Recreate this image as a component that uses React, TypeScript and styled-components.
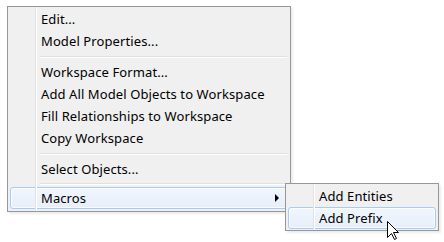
import React from 'react';
import styled, { createGlobalStyle } from 'styled-components';

const GlobalStyle = createGlobalStyle`
  html, body {
    margin: 0;
    padding: 0;
    background: #ffffff;
  }
  body {
    font-family: 'Noto Sans', 'Open Sans', sans-serif;
    font-size: 13px;
    letter-spacing: 0.1px;
    color: #000;
  }
`;

const Stage = styled.div`
  position: relative;
  width: 444px;
  height: 242px;
  padding: 6px 0 0 7px;
  box-sizing: border-box;
  overflow: hidden;
`;

const Menu = styled.div<{ $width: number }>`
  position: relative;
  width: ${(p) => p.$width}px;
  box-sizing: border-box;
  border: 1px solid #979797;
  background: #f0f0f0;
  padding: 1px 2px 2px;
  display: flex;
  flex-direction: column;
  box-shadow: 2px 2px 2px rgba(0, 0, 0, 0.08);

  &::before {
    content: '';
    position: absolute;
    top: 0;
    bottom: 0;
    left: 27px;
    width: 1px;
    background: #e2e3e3;
    border-right: 1px solid #ffffff;
    z-index: 1;
    pointer-events: none;
  }
`;

const SubMenu = styled(Menu)`
  position: absolute;
  left: 274px;
  top: -5px;
  padding: 1px 2px;
  z-index: 5;
`;

const Item = styled.div<{ $active?: boolean }>`
  position: relative;
  height: 22px;
  box-sizing: border-box;
  display: flex;
  align-items: center;
  padding-left: 30px;
  border: 1px solid ${(p) => (p.$active ? '#a8cbf3' : 'transparent')};
  border-radius: 3px;
  background: ${(p) =>
    p.$active ? 'linear-gradient(to bottom, #f1f6fd 0%, #e6eefa 100%)' : 'transparent'};
  box-shadow: ${(p) => (p.$active ? 'inset 0 0 0 1px rgba(255,255,255,0.7)' : 'none')};
  white-space: nowrap;
`;

const Label = styled.span`
  flex: 1;
`;

const Arrow = styled.span`
  width: 0;
  height: 0;
  border-top: 4px solid transparent;
  border-bottom: 4px solid transparent;
  border-left: 4px solid #000;
  margin-right: 8px;
`;

const Separator = styled.div<{ $height?: number }>`
  height: ${(p) => p.$height ?? 9}px;
  display: flex;
  align-items: center;
  margin-left: 30px;
  margin-right: 1px;

  &::after {
    content: '';
    display: block;
    width: 100%;
    height: 1px;
    background: #e0e0e0;
    border-bottom: 1px solid #ffffff;
  }
`;

const Cursor = styled.svg`
  position: absolute;
  left: 387px;
  top: 221px;
  z-index: 10;
`;

const App: React.FC = () => {
  return (
    <>
      <GlobalStyle />
      <Stage>
        <Menu $width={284}>
          <Item><Label>Edit...</Label></Item>
          <Item><Label>Model Properties...</Label></Item>
          <Separator />
          <Item><Label>Workspace Format...</Label></Item>
          <Item><Label>Add All Model Objects to Workspace</Label></Item>
          <Item><Label>Fill Relationships to Workspace</Label></Item>
          <Item><Label>Copy Workspace</Label></Item>
          <Separator />
          <Item><Label>Select Objects...</Label></Item>
          <Separator $height={7} />
          <Item $active>
            <Label>Macros</Label>
            <Arrow />
            <SubMenu $width={154}>
              <Item><Label>Add Entities</Label></Item>
              <Item $active><Label>Add Prefix</Label></Item>
            </SubMenu>
          </Item>
        </Menu>
        <Cursor width="13" height="20" viewBox="0 0 13 20">
          <path
            d="M0.5 0.5 L0.5 16.5 L4.5 12.5 L7.5 18.5 L9.5 17.5 L6.5 11.5 L11.5 11.5 Z"
            fill="#ffffff"
            stroke="#000000"
            strokeWidth="1"
            strokeLinejoin="miter"
          />
        </Cursor>
      </Stage>
    </>
  );
};

export default App;
